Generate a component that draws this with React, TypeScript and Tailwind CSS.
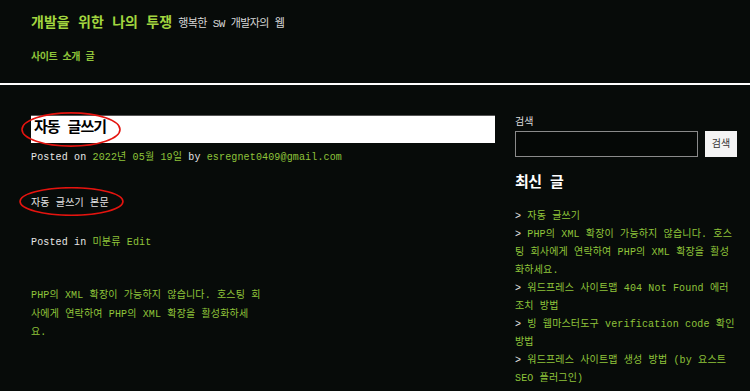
const recent = [
  "자동 글쓰기",
  "PHP의 XML 확장이 가능하지 않습니다. 호스팅 회사에게 연락하여 PHP의 XML 확장을 활성화하세요.",
  "워드프레스 사이트맵 404 Not Found 에러 조치 방법",
  "빙 웹마스터도구 verification code 확인 방법",
  "워드프레스 사이트맵 생성 방법 (by 요스트 SEO 플러그인)",
];

const Ellipse = ({ className }: { className: string }) => (
  <svg className={`absolute pointer-events-none ${className}`} viewBox="0 0 100 40" preserveAspectRatio="none">
    <ellipse cx="50" cy="20" rx="49" ry="19" fill="none" stroke="#e4140f" strokeWidth="1.6" vectorEffect="non-scaling-stroke" />
  </svg>
);

export default function App() {
  return (
    <div
      className="w-[750px] h-[391px] overflow-hidden bg-[#070b09] text-[10px] tracking-[0.15px] text-[#e6e6e6] break-all"
      style={{ fontFamily: '"Liberation Mono", "Noto Sans CJK KR", monospace' }}
    >
      <header className="h-[83px] pl-[31px] pt-[13px]">
        <div className="flex items-baseline gap-[6px]">
          <span className="text-[14px] font-bold text-[#a2d63f] tracking-normal">개발을 위한 나의 투쟁</span>
          <span className="text-[11px] text-[#d8d8d8] tracking-[-0.6px]">행복한 SW 개발자의 웹</span>
        </div>
        <div className="mt-[16px] text-[10px] font-bold text-[#8fc43a] tracking-[-0.5px]">사이트 소개 글</div>
      </header>
      <div className="h-[2px] bg-white" />

      <main className="flex gap-[20px] pl-[31px] pt-[30px]">
        <section className="relative w-[464px]">
          <div className="h-[28px] bg-white border-t border-[#555] flex items-center pl-[3px]">
            <h1 className="text-[15px] font-bold text-black tracking-[-1px]">자동 글쓰기</h1>
          </div>
          <Ellipse className="left-[-10px] top-[-3px] w-[100px] h-[35px]" />

          <p className="mt-[6px] leading-[18px]">
            Posted on <span className="text-[#8fc43a]">2022년 05월 19일</span> by{" "}
            <span className="text-[#8fc43a]">esregnet0409@gmail.com</span>
          </p>

          <p className="mt-[28px] leading-[18px]">자동 글쓰기 본문</p>
          <Ellipse className="left-[-12px] top-[72px] w-[105px] h-[29px]" />

          <p className="mt-[21px] leading-[18px]">
            Posted in <span className="text-[#8fc43a]">미분류</span> <span className="text-[#8fc43a]">Edit</span>
          </p>

          <p className="mt-[35px] w-[230px] leading-[18.5px] text-[#8fc43a]">
            PHP의 XML 확장이 가능하지 않습니다. 호스팅 회사에게 연락하여 PHP의 XML 확장을 활성화하세요.
          </p>
        </section>

        <aside className="w-[222px]">
          <label className="block mt-[2px] text-[10px] leading-[12px] text-[#dcdcdc]">검색</label>
          <div className="mt-[2px] flex gap-[7px]">
            <input className="w-[183px] h-[26px] bg-[#050806] border border-[#8a8a8a] outline-none" />
            <button className="w-[32px] h-[26px] bg-[#f4f4f4] text-[10px] text-[#333]">검색</button>
          </div>
          <h2 className="mt-[16px] text-[15px] font-bold text-white tracking-[-0.5px]">최신 글</h2>
          <ul className="mt-[12px] leading-[18px]">
            {recent.map((t) => (
              <li key={t}>
                <span className="text-[#e6e6e6]">&gt; </span>
                <span className="text-[#8fc43a]">{t}</span>
              </li>
            ))}
          </ul>
        </aside>
      </main>
    </div>
  );
}
